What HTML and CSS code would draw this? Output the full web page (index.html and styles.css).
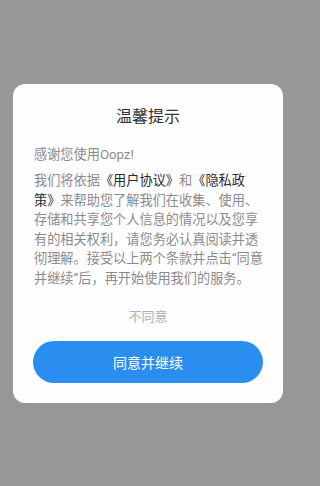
FILE: index.html
```html
<!DOCTYPE html>
<html lang="zh">
<head>
<meta charset="utf-8">
<link rel="stylesheet" href="styles.css">
</head>
<body>
<div class="screen">
  <div class="dialog">
    <h1 class="title">温馨提示</h1>
    <p class="intro">感谢您使用Oopz!</p>
    <p class="body">我们将依据<span class="link">《用户协议》</span>和<span class="link">《隐私政策》</span>来帮助您了解我们在收集、使用、存储和共享您个人信息的情况以及您享有的相关权利，请您务必认真阅读并透彻理解。接受以上两个条款并点击“同意并继续”后，再开始使用我们的服务。</p>
    <div class="decline">不同意</div>
    <button class="accept">同意并继续</button>
  </div>
</div>
</body>
</html>
```
FILE: styles.css
```css
html, body {
  margin: 0;
  padding: 0;
}
body {
  background: #979797;
  font-family: Roboto, "Noto Sans CJK SC", sans-serif;
}
.screen {
  width: 296px;
  height: 486px;
  padding-top: 84px;
  box-sizing: border-box;
}
.dialog {
  margin-left: 13px;
  width: 270px;
  box-sizing: border-box;
  background: #fefdff;
  border-radius: 12px;
  padding: 22px 20px 20px;
  display: flex;
  flex-direction: column;
}
.title {
  margin: 0;
  font-size: 16px;
  line-height: 22px;
  font-weight: 400;
  color: #333;
  text-align: center;
}
.intro,
.body {
  margin: 0;
  font-size: 13.2px;
  line-height: 19.6px;
  color: #8c8c8c;
  padding-left: 1px;
}
.intro {
  margin-top: 17px;
}
.body {
  margin-top: 6.4px;
}
.link {
  font-weight: 400;
  color: #2b2b2b;
}
.decline {
  margin-top: 18px;
  font-size: 13px;
  line-height: 20px;
  color: #b0b0b0;
  text-align: center;
}
.accept {
  margin-top: 14px;
  height: 42px;
  border: none;
  border-radius: 21px;
  background: #2a8df0;
  color: #fff;
  font-family: Roboto, "Noto Sans CJK SC", sans-serif;
  font-size: 14px;
  padding: 0;
}
```
